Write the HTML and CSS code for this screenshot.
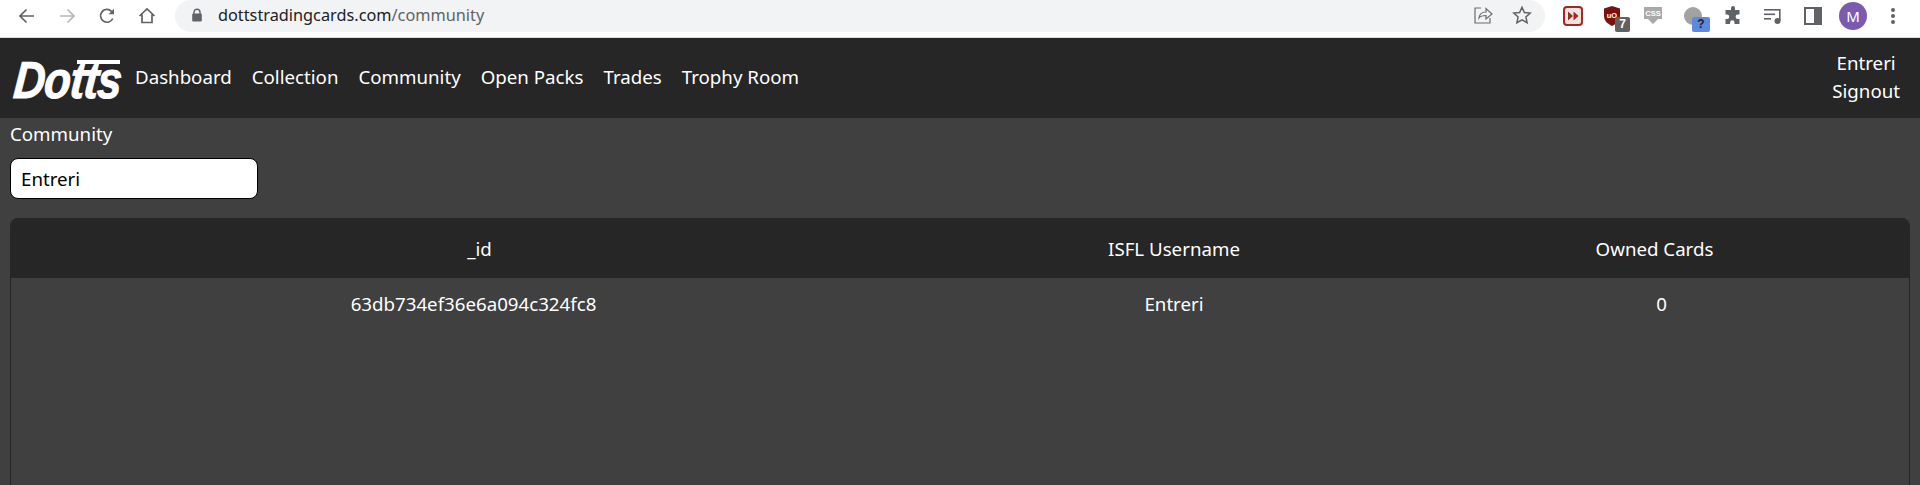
FILE: index.html
```html
<!DOCTYPE html>
<html lang="en">
<head>
    <meta charset="UTF-8">
    <title>Dotts Trading Cards - Community</title>
    <link rel="stylesheet" href="styles.css">
</head>
<body>
    <div class="browser-bar">
        <div class="tool-btn"><svg width="20" height="20" viewBox="0 0 20 20" fill="none" stroke="#5f6368" stroke-width="1.7"><path d="M17 10H3.500M9.500 3.500L3 10l6.500 6.500"/></svg></div>
        <div class="tool-btn"><svg width="20" height="20" viewBox="0 0 20 20" fill="none" stroke="#b4b6b9" stroke-width="1.7"><path d="M3 10h13.500M10.500 3.500L17 10l-6.500 6.500"/></svg></div>
        <div class="tool-btn"><svg width="20" height="20" viewBox="0 0 20 20" fill="none" stroke="#5f6368" stroke-width="1.7"><path d="M15.800 12.500A6.400 6.400 0 1 1 14.500 5.300L16.500 7.500"/><path d="M17 2.800V8.200h-5.400z" stroke="none" fill="#5f6368"/></svg></div>
        <div class="tool-btn"><svg width="20" height="20" viewBox="0 0 20 20" fill="none" stroke="#5f6368" stroke-width="1.7"><path d="M2.500 10L10 3l7.500 7M5 8.500V16.500h10V8.500"/></svg></div>
        <div class="omnibox">
            <svg class="lock" width="12" height="14" viewBox="0 0 12 14"><path d="M3 6V4.200a3 3 0 0 1 6 0V6" fill="none" stroke="#5f6368" stroke-width="1.400"/><rect x="1.200" y="5.500" width="9.600" height="8" rx="1.200" fill="#5f6368"/></svg>
            <span class="url-host">dottstradingcards.com</span><span class="url-path">/community</span>
            <div class="omni-icons">
                <svg width="20" height="20" viewBox="0 0 20 20" fill="none" stroke="#6a6e72" stroke-width="1.200"><path d="M8 3H2v15h15v-5"/><path d="M6 13c.5-4 3.500-6 7-6V3.500l6 5.500-6 5v-3.500c-3 0-5.500.5-7 2.500z"/></svg>
                <svg width="20" height="20" viewBox="0 0 20 20" fill="none" stroke="#5f6368" stroke-width="1.500"><path d="M10 2.200l2.400 5.300 5.800.6-4.300 3.900 1.200 5.700L10 14.800l-5.100 2.900 1.200-5.700L1.800 8.100l5.800-.6z"/></svg>
            </div>
        </div>
        <div class="tool-btn"><svg width="20" height="20" viewBox="0 0 20 20"><rect x="1" y="1" width="18" height="18" rx="3" fill="#f3e3e0" stroke="#9c2a22" stroke-width="2"/><path d="M5 5.500l5 4.500-5 4.500zM10.500 5.500l5 4.500-5 4.500z" fill="#9c2a22"/></svg></div>
        <div class="tool-btn">
            <svg class="shield" width="20" height="22" viewBox="0 0 20 22"><path d="M10 1l8 2.500V11c0 5-4 8-8 10-4-2-8-5-8-10V3.500z" fill="#7b1010"/><text x="10" y="13" class="ext-text">uO</text></svg>
            <span class="badge badge-grey">7</span>
        </div>
        <div class="tool-btn"><svg width="20" height="20" viewBox="0 0 20 20"><path d="M1 1h18v12h-4l-5 5-5-5H1z" fill="#a9a9a9"/><text x="10" y="10" class="ext-text">CSS</text></svg></div>
        <div class="tool-btn">
            <svg width="20" height="20" viewBox="0 0 20 20"><circle cx="10" cy="10" r="9" fill="#a2a2a2"/></svg>
            <span class="badge badge-blue">?</span>
        </div>
        <div class="tool-btn"><svg width="20" height="20" viewBox="0 0 20 20"><path d="M8 2a2 2 0 0 1 4 0v2h4.500v4.500h-1.700a2.200 2.200 0 0 0 0 4.400h1.700V18h-5v-1.500a2.200 2.200 0 0 0-4.400 0V18H2.500v-5H4a2.200 2.200 0 0 0 0-4.500H2.500V4H8z" fill="#5f6368"/></svg></div>
        <div class="tool-btn"><svg width="20" height="20" viewBox="0 0 20 20" fill="#5f6368"><rect x="1" y="3" width="15" height="1.600"/><rect x="1" y="7.500" width="11" height="1.600"/><rect x="1" y="12" width="7" height="1.600"/><rect x="16" y="3" width="1.600" height="12"/><circle cx="14.500" cy="15" r="3"/></svg></div>
        <div class="tool-btn"><svg width="20" height="20" viewBox="0 0 20 20"><rect x="2" y="2" width="16" height="16" fill="none" stroke="#5f6368" stroke-width="2"/><rect x="11" y="2" width="7" height="16" fill="#5f6368"/></svg></div>
        <div class="tool-btn"><div class="avatar">M</div></div>
        <div class="tool-btn"><svg width="6" height="18" viewBox="0 0 6 18" fill="#5f6368"><circle cx="3" cy="3" r="2"/><circle cx="3" cy="9" r="2"/><circle cx="3" cy="15" r="2"/></svg></div>
    </div>

    <nav class="navbar">
        <a class="logo" href="#"><span class="logo-text">Dotts</span></a>
        <div class="nav-links">
            <a href="#">Dashboard</a>
            <a href="#">Collection</a>
            <a href="#">Community</a>
            <a href="#">Open Packs</a>
            <a href="#">Trades</a>
            <a href="#">Trophy Room</a>
        </div>
        <div class="nav-user">
            <a href="#">Entreri</a>
            <a href="#">Signout</a>
        </div>
    </nav>

    <div class="content">
        <div class="page-title">Community</div>
        <input class="search" type="text" value="Entreri">
        <div class="table-wrap">
            <table>
                <colgroup>
                    <col class="col-id">
                    <col class="col-name">
                    <col>
                </colgroup>
                <thead>
                    <tr><th class="th-id">_id</th><th>ISFL Username</th><th class="th-owned">Owned Cards</th></tr>
                </thead>
                <tbody>
                    <tr><td>63db734ef36e6a094c324fc8</td><td>Entreri</td><td class="td-owned">0</td></tr>
                </tbody>
            </table>
        </div>
    </div>
</body>
</html>
```

FILE: styles.css
```css
html, body {
    height: 485px;
    overflow: hidden;
}
body {
    margin: 0;
    background-color: #404040;
    color: white;
    font-family: "Noto Sans", "Open Sans", Arial, sans-serif;
    font-size: 18.7px;
}
a {
    color: white;
    text-decoration: none;
}

/* browser chrome */
.browser-bar {
    display: flex;
    height: 37px;
    padding: 0 7px;
    background-color: white;
    border-bottom: 1px solid #dadce0;
}
.tool-btn {
    position: relative;
    flex: none;
    display: flex;
    align-items: center;
    justify-content: center;
    width: 40px;
    height: 31px;
}
.omnibox {
    flex: 1;
    display: flex;
    align-items: center;
    box-sizing: border-box;
    height: 32px;
    margin: 0 8px;
    padding: 0 0 2px 16px;
    background-color: #f1f3f4;
    border-radius: 16px;
    font-size: 16.3px;
}
.lock {
    margin-right: 15px;
}
.url-host {
    color: #202124;
}
.url-path {
    color: #5f6368;
}
.omni-icons {
    display: flex;
    gap: 19px;
    margin-left: auto;
    margin-right: 13px;
}
.shield {
    margin-right: 2px;
}
.ext-text {
    fill: white;
    font-family: "Liberation Sans", Arial, sans-serif;
    font-size: 7.5px;
    font-weight: 700;
    text-anchor: middle;
}
.badge {
    position: absolute;
    top: 17px;
    left: 22px;
    width: 15px;
    height: 15px;
    border-radius: 2px;
    color: white;
    font-family: "Liberation Sans", Arial, sans-serif;
    font-size: 12px;
    font-weight: 700;
    line-height: 15px;
    text-align: center;
}
.badge-grey {
    background-color: #616161;
}
.badge-blue {
    left: 19px;
    width: 18px;
    background-color: #5b8ae0;
    color: #202124;
}
.avatar {
    width: 28px;
    height: 28px;
    border-radius: 50%;
    background-color: #7b5bb0;
    color: white;
    font-size: 15px;
    line-height: 28px;
    text-align: center;
}

/* site nav */
.navbar {
    display: flex;
    align-items: center;
    height: 80px;
    padding: 0 20px 0 14px;
    background-color: #262626;
}
.logo {
    position: relative;
    flex: none;
    width: 121px;
    height: 50px;
}
.logo::after {
    content: "";
    position: absolute;
    top: 7px;
    left: 63px;
    width: 43px;
    height: 4px;
    background-color: white;
}
.logo-text {
    display: inline-block;
    font-family: "Liberation Sans", Arial, sans-serif;
    font-size: 52px;
    font-style: italic;
    font-weight: 700;
    line-height: 54px;
    letter-spacing: -1px;
    -webkit-text-stroke: 1px white;
    transform-origin: left center;
    transform: scaleX(0.84) skewX(-6deg);
}
.nav-links {
    display: flex;
    gap: 20px;
    margin-top: -4px;
}
.nav-user {
    display: flex;
    flex-direction: column;
    align-items: center;
    gap: 3px;
    margin-top: -3px;
    margin-left: auto;
}

/* page */
.content {
    padding: 0 10px;
}
.page-title {
    height: 40px;
    line-height: 32px;
}
.search {
    display: block;
    box-sizing: border-box;
    width: 248px;
    height: 41px;
    padding: 0 10px;
    border: 1px solid black;
    border-radius: 8px;
    background-color: white;
    color: black;
    font-family: inherit;
    font-size: 18.7px;
}
.table-wrap {
    min-height: 400px;
    margin-top: 19px;
    border: 1px solid #262626;
    border-width: 0 1px;
    border-radius: 8px 8px 0 0;
    overflow: hidden;
}
table {
    width: 100%;
    border-collapse: collapse;
    table-layout: fixed;
}
.col-id {
    width: 925px;
}
.col-name {
    width: 476px;
}
th {
    height: 60px;
    padding: 0;
    background-color: #262626;
    font-weight: 400;
}
.th-id {
    padding-left: 12px;
}
.th-owned {
    padding-right: 12px;
}
td {
    height: 51px;
    padding: 0;
    text-align: center;
}
.td-owned {
    padding-left: 2px;
}
```
